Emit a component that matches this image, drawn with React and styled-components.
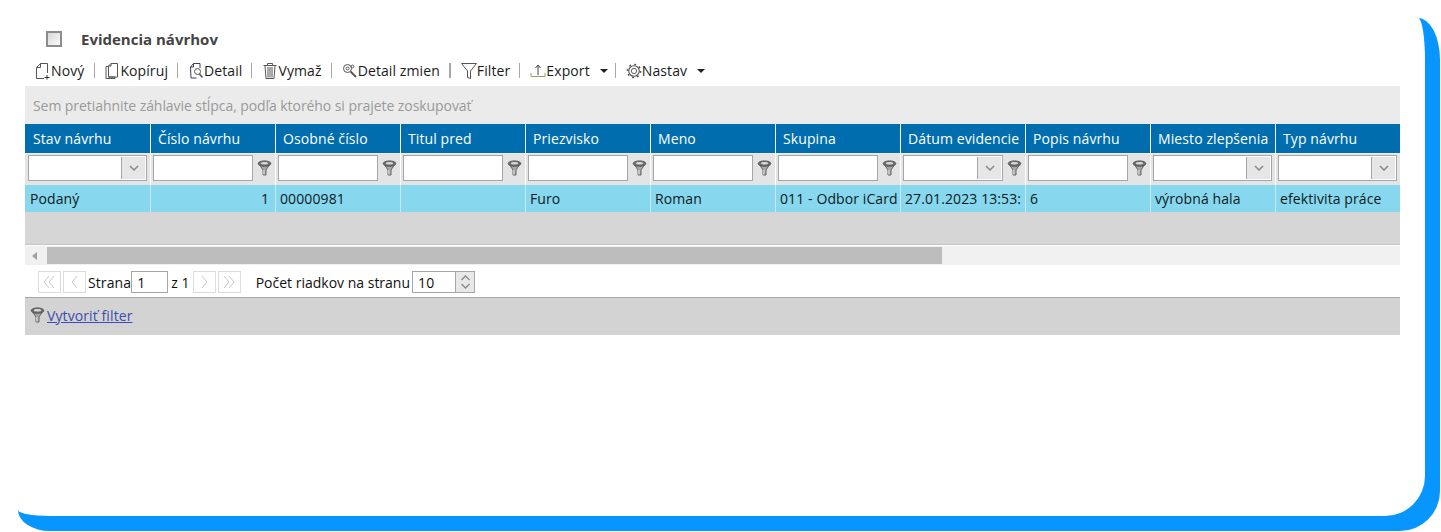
import React from "react";
import styled, { createGlobalStyle } from "styled-components";

const Global = createGlobalStyle`
  html, body { margin: 0; padding: 0; background: #fff; }
  body { font-family: "Open Sans", "Noto Sans", sans-serif; font-size: 14px; color: #111; overflow: hidden; }
  * { box-sizing: border-box; }
`;

const columns = [
  { title: "Stav návrhu", value: "Podaný", filter: "select" },
  { title: "Číslo návrhu", value: "1", filter: "text", right: true },
  { title: "Osobné číslo", value: "00000981", filter: "text" },
  { title: "Titul pred", value: "", filter: "text" },
  { title: "Priezvisko", value: "Furo", filter: "text" },
  { title: "Meno", value: "Roman", filter: "text" },
  { title: "Skupina", value: "011 - Odbor iCard", filter: "text" },
  { title: "Dátum evidencie", value: "27.01.2023 13:53:", filter: "date" },
  { title: "Popis návrhu", value: "6", filter: "text" },
  { title: "Miesto zlepšenia", value: "výrobná hala", filter: "select" },
  { title: "Typ návrhu", value: "efektivita práce", filter: "select" },
];

const Frame = styled.div`
  margin: 18px 0 0 18px;
  width: 1422px;
  height: 513px;
  background: #0795ff;
  padding: 0 15px 15px 0;
  border-top-right-radius: 22px 42px;
  border-bottom-right-radius: 40px;
  border-bottom-left-radius: 32px 21px;
`;
const Sheet = styled.div`
  height: 100%;
  background: #fff;
  padding: 7px 25px 0 7px;
  border-top-right-radius: 7px 42px;
  border-bottom-right-radius: 40px;
  border-bottom-left-radius: 32px 6px;
`;
const TitleRow = styled.div`
  height: 28px;
  display: flex;
  align-items: center;
  padding-left: 21px;
  gap: 19px;
`;
const CheckBox = styled.span`
  width: 16px;
  height: 16px;
  border: 2px solid #8c8c8c;
  background: linear-gradient(135deg, #d8d8d8, #fafafa);
`;
const Title = styled.h1`
  margin: 0;
  font-size: 15px;
  font-weight: 700;
  color: #444;
  letter-spacing: 0;
`;
const Toolbar = styled.div`
  height: 33px;
  display: flex;
  align-items: center;
  padding: 2px 0 0 10px;
`;
const ToolItem = styled.span`
  display: inline-flex;
  align-items: center;
  white-space: nowrap;
  color: #1b1b1b;
  font-size: 14px;
  letter-spacing: 0.1px;
  svg { flex: none; }
`;
const ToolSep = styled.span`
  width: ${(p) => (p.$strong ? 2 : 1)}px;
  height: 15px;
  background: #a8a8a8;
  margin: 0 ${(p) => p.$right || 10}px 0 ${(p) => p.$left || 9}px;
`;
const Caret = styled.span`
  width: 0;
  height: 0;
  margin-left: 10px;
  border-left: 4px solid transparent;
  border-right: 4px solid transparent;
  border-top: 4px solid #222;
`;
const GroupPanel = styled.div`
  height: 38px;
  background: #ebebeb;
  color: #999;
  font-size: 14px;
  letter-spacing: -0.07px;
  padding: 0 8px;
  display: flex;
  align-items: center;
`;
const Row = styled.div`
  display: grid;
  grid-template-columns: repeat(11, 125px);
`;
const HeadCell = styled.div`
  height: 29px;
  background: #006eae;
  color: #fff;
  border-left: 1px solid #fff;
  padding-left: 7px;
  line-height: 29px;
  font-size: 14px;
  letter-spacing: 0.1px;
  white-space: nowrap;
  overflow: hidden;
  &:first-child { border-left-color: #006eae; }
`;
const FilterCell = styled.div`
  height: 32px;
  background: #e4e4e4;
  border-left: 1px solid #fff;
  border-top: 1px solid #ededed;
  padding: 1px 3px 0 2px;
  display: flex;
  gap: 4px;
  &:first-child { border-left-color: #e4e4e4; }
`;
const FilterInput = styled.div`
  flex: ${(p) => (p.$grow ? 1 : "none")};
  width: ${(p) => (p.$grow ? "auto" : "100px")};
  height: 26px;
  background: #fff;
  border: 1px solid #a6a6a6;
  display: flex;
  justify-content: flex-end;
`;
const DropButton = styled.span`
  width: 24px;
  margin: 1px;
  background: #e6e6e6;
  border-left: 1px solid #a6a6a6;
  display: flex;
  align-items: center;
  justify-content: center;
`;
const FunnelSlot = styled.span`
  width: 15px;
  display: flex;
  align-items: center;
  justify-content: center;
  height: 26px;
`;
const DataCell = styled.div`
  height: 27px;
  background: #87d7ef;
  border-left: 1px solid #c9e9f4;
  padding: 0 ${(p) => (p.$right ? 6 : 0)}px 0 4px;
  text-align: ${(p) => (p.$right ? "right" : "left")};
  line-height: 27px;
  font-size: 14px;
  letter-spacing: 0.1px;
  white-space: nowrap;
  overflow: hidden;
  color: #0c1a20;
  &:first-child { border-left-color: #87d7ef; }
`;
const EmptyArea = styled.div`
  height: 33px;
  background: #d6d6d6;
  border-bottom: 1px solid #c4c4c4;
`;
const ScrollBar = styled.div`
  height: 21px;
  margin-top: 1px;
  background: #f0f0f0;
  border-bottom: 2px solid #fff;
  padding: 1px 0;
  display: flex;
  align-items: stretch;
`;
const ScrollLeft = styled.span`
  width: 22px;
  display: flex;
  align-items: center;
  justify-content: center;
  &::before {
    content: "";
    border-top: 4px solid transparent;
    border-bottom: 4px solid transparent;
    border-right: 5px solid #a0a0a0;
    margin-right: 3px;
  }
`;
const ScrollThumb = styled.span`
  width: 895px;
  background: #bdbdbd;
`;
const Pager = styled.div`
  height: 31px;
  display: flex;
  align-items: flex-start;
  padding: 4px 0 0 13px;
  border-bottom: 1px solid #a8a8a8;
  font-size: 14px;
  letter-spacing: 0.1px;
  line-height: 23px;
`;
const PageButton = styled.span`
  width: 23px;
  height: 22px;
  margin-right: 2px;
  border: 1px solid #dcdcdc;
  display: flex;
  align-items: center;
  justify-content: center;
`;
const PageInput = styled.span`
  height: 22px;
  width: ${(p) => p.$w}px;
  flex: none;
  border: 1px solid #a6a6a6;
  padding-left: 5px;
  line-height: 21px;
`;
const Spinner = styled.span`
  width: 20px;
  height: 22px;
  margin-left: -1px;
  border: 1px solid #a6a6a6;
  background: #e8e8e8;
  display: flex;
  align-items: center;
  justify-content: center;
`;
const PagerText = styled.span`
  margin: 0 ${(p) => p.$right || 0}px 0 ${(p) => p.$left || 0}px;
  white-space: nowrap;
`;
const PagerLabel = styled(PagerText)`
  letter-spacing: 0;
`;
const FilterBar = styled.div`
  height: 37px;
  background: #d3d3d3;
  display: flex;
  align-items: center;
  padding: 0 0 3px 5px;
  gap: 2px;
`;
const FilterLink = styled.a`
  color: #3a4db0;
  text-decoration: underline;
  font-size: 14px;
  letter-spacing: 0.1px;
`;

function Funnel() {
  return (
    <svg width="15" height="16" viewBox="0 0 15 16">
      <path d="M3 5.5 L6 10 V15 H9 V10 L12 5.5 Z" fill="#a8a8a8" stroke="#5a5a5a" strokeWidth=".9" />
      <ellipse cx="7.5" cy="3.6" rx="6.3" ry="2.7" fill="#6e6e6e" stroke="#565656" />
      <ellipse cx="7.5" cy="3.2" rx="3.6" ry="1.2" fill="#d8d8d8" />
      <path d="M6.9 10 V14.5" stroke="#ededed" strokeWidth="1" />
    </svg>
  );
}

function Chevron() {
  return (
    <svg width="10" height="6" viewBox="0 0 10 6">
      <path d="M1 1 L5 5 L9 1" fill="none" stroke="#888" strokeWidth="1.5" />
    </svg>
  );
}

function PagerArrow({ dir, double }) {
  const d = dir === "left" ? "M7 1 L2 7 L7 13" : "M2 1 L7 7 L2 13";
  return (
    <svg width={double ? 15 : 9} height="14" viewBox={double ? "0 0 15 14" : "0 0 9 14"}>
      <path d={d} fill="none" stroke="#c8c8c8" />
      {double && <path d={d} transform="translate(5 0)" fill="none" stroke="#c8c8c8" />}
    </svg>
  );
}

const stroke = { fill: "none", stroke: "#555", strokeWidth: 1 };

function IconNew() {
  return (
    <svg width="16" height="18" viewBox="0 0 16 18">
      <path d="M5.5 1.5 H12.5 V11 M5.5 1.5 L1.5 5.5 V16.5 H9 M5.5 1.5 V5.5 H1.5" {...stroke} />
      <path d="M12 13 V17.5 M9.5 15.5 H14.5" stroke="#333" fill="none" />
    </svg>
  );
}
function IconCopy() {
  return (
    <svg width="16" height="18" viewBox="0 0 16 18">
      <path d="M2 4.5 H4.5 V15 H11 V16.5 H2 Z" {...stroke} />
      <path d="M7 1.5 H13.5 V15 H4.5 V4 Z M7 1.5 V4 H4.5" {...stroke} />
    </svg>
  );
}
function IconDetail() {
  return (
    <svg width="16" height="18" viewBox="0 0 16 18">
      <path d="M5.5 1.5 H12 V6 M5.5 1.5 L2.5 5 L3 16 H8.5 M5.5 1.5 V5 H2.5" fill="none" stroke="#4b3a5c" />
      <circle cx="9.5" cy="9.5" r="3" fill="none" stroke="#555" />
      <path d="M11.5 12 L14.5 15.5" stroke="#555" strokeWidth="1.6" />
    </svg>
  );
}
function IconTrash() {
  return (
    <svg width="16" height="18" viewBox="0 0 16 18">
      <path d="M1.5 3.5 H14.5 M5.5 3 V1.5 H10.5 V3" {...stroke} />
      <path d="M3 4 L4 16.5 H12 L13 4" {...stroke} />
      <path d="M6 5 V15.5 M8 5 V15.5 M10 5 V15.5" {...stroke} />
    </svg>
  );
}
function IconHistory() {
  return (
    <svg width="16" height="18" viewBox="0 0 16 18">
      <circle cx="5.5" cy="6.5" r="4" {...stroke} />
      <circle cx="5.5" cy="6.5" r="1.5" {...stroke} />
      <circle cx="10.5" cy="4.5" r="1.4" {...stroke} />
      <path d="M8.5 9.5 L14 15" stroke="#555" strokeWidth="1.8" />
    </svg>
  );
}
function IconFilter() {
  return (
    <svg width="16" height="18" viewBox="0 0 16 18">
      <path d="M.5 1.5 H15.5 L9.5 9 V16.5 L6.5 15.5 V9 Z" {...stroke} />
    </svg>
  );
}
function IconExport() {
  return (
    <svg width="16" height="18" viewBox="0 0 16 18">
      <path d="M8 3 V13 M5.5 6 L8 3 L10.5 6" fill="none" stroke="#444" />
      <path d="M1 11 V14.5 H15 V11" fill="none" stroke="#8fa45a" />
    </svg>
  );
}
function IconGear() {
  return (
    <svg width="16" height="18" viewBox="0 0 17 18">
      <circle cx="8.5" cy="9" r="5.6" fill="none" stroke="#555" strokeWidth="1.2" />
      <circle cx="8.5" cy="9" r="2.8" fill="none" stroke="#555" />
      <circle cx="8.5" cy="9" r="7" fill="none" stroke="#555" strokeWidth="1.6" strokeDasharray="2 3.5" />
    </svg>
  );
}

function FilterControl({ type }) {
  if (type === "select") {
    return (
      <FilterInput $grow>
        <DropButton><Chevron /></DropButton>
      </FilterInput>
    );
  }
  if (type === "date") {
    return (
      <>
        <FilterInput>
          <DropButton><Chevron /></DropButton>
        </FilterInput>
        <FunnelSlot><Funnel /></FunnelSlot>
      </>
    );
  }
  return (
    <>
      <FilterInput />
      <FunnelSlot><Funnel /></FunnelSlot>
    </>
  );
}

export default function App() {
  return (
    <Frame>
      <Global />
      <Sheet>
        <TitleRow>
          <CheckBox />
          <Title>Evidencia návrhov</Title>
        </TitleRow>
        <Toolbar>
          <ToolItem><IconNew />Nový</ToolItem>
          <ToolSep $left={10} $right={9} />
          <ToolItem><IconCopy />Kopíruj</ToolItem>
          <ToolSep />
          <ToolItem><IconDetail />Detail</ToolItem>
          <ToolSep />
          <ToolItem><IconTrash />Vymaž</ToolItem>
          <ToolSep />
          <ToolItem><IconHistory />Detail zmien</ToolItem>
          <ToolSep $strong />
          <ToolItem><IconFilter />Filter</ToolItem>
          <ToolSep />
          <ToolItem><IconExport />Export<Caret /></ToolItem>
          <ToolSep $left={7} />
          <ToolItem><IconGear />Nastav<Caret /></ToolItem>
        </Toolbar>
        <GroupPanel>Sem pretiahnite záhlavie stĺpca, podľa ktorého si prajete zoskupovať</GroupPanel>
        <Row>
          {columns.map((c) => <HeadCell key={c.title}>{c.title}</HeadCell>)}
        </Row>
        <Row>
          {columns.map((c) => (
            <FilterCell key={c.title}><FilterControl type={c.filter} /></FilterCell>
          ))}
        </Row>
        <Row>
          {columns.map((c) => (
            <DataCell key={c.title} $right={c.right}>{c.value}</DataCell>
          ))}
        </Row>
        <EmptyArea />
        <ScrollBar>
          <ScrollLeft />
          <ScrollThumb />
        </ScrollBar>
        <Pager>
          <PageButton><PagerArrow dir="left" double /></PageButton>
          <PageButton><PagerArrow dir="left" /></PageButton>
          <PagerText>Strana</PagerText>
          <PageInput $w={37}>1</PageInput>
          <PagerText $left={3} $right={3}>z 1</PagerText>
          <PageButton><PagerArrow dir="right" /></PageButton>
          <PageButton><PagerArrow dir="right" double /></PageButton>
          <PagerLabel $left={13} $right={2}>Počet riadkov na stranu</PagerLabel>
          <PageInput $w={44}>10</PageInput>
          <Spinner>
            <svg width="11" height="16" viewBox="0 0 11 16">
              <path d="M1.5 6 L5.5 2 L9.5 6 M1.5 10 L5.5 14 L9.5 10" fill="none" stroke="#888" strokeWidth="1.3" />
            </svg>
          </Spinner>
        </Pager>
        <FilterBar>
          <Funnel />
          <FilterLink>Vytvoriť filter</FilterLink>
        </FilterBar>
      </Sheet>
    </Frame>
  );
}
